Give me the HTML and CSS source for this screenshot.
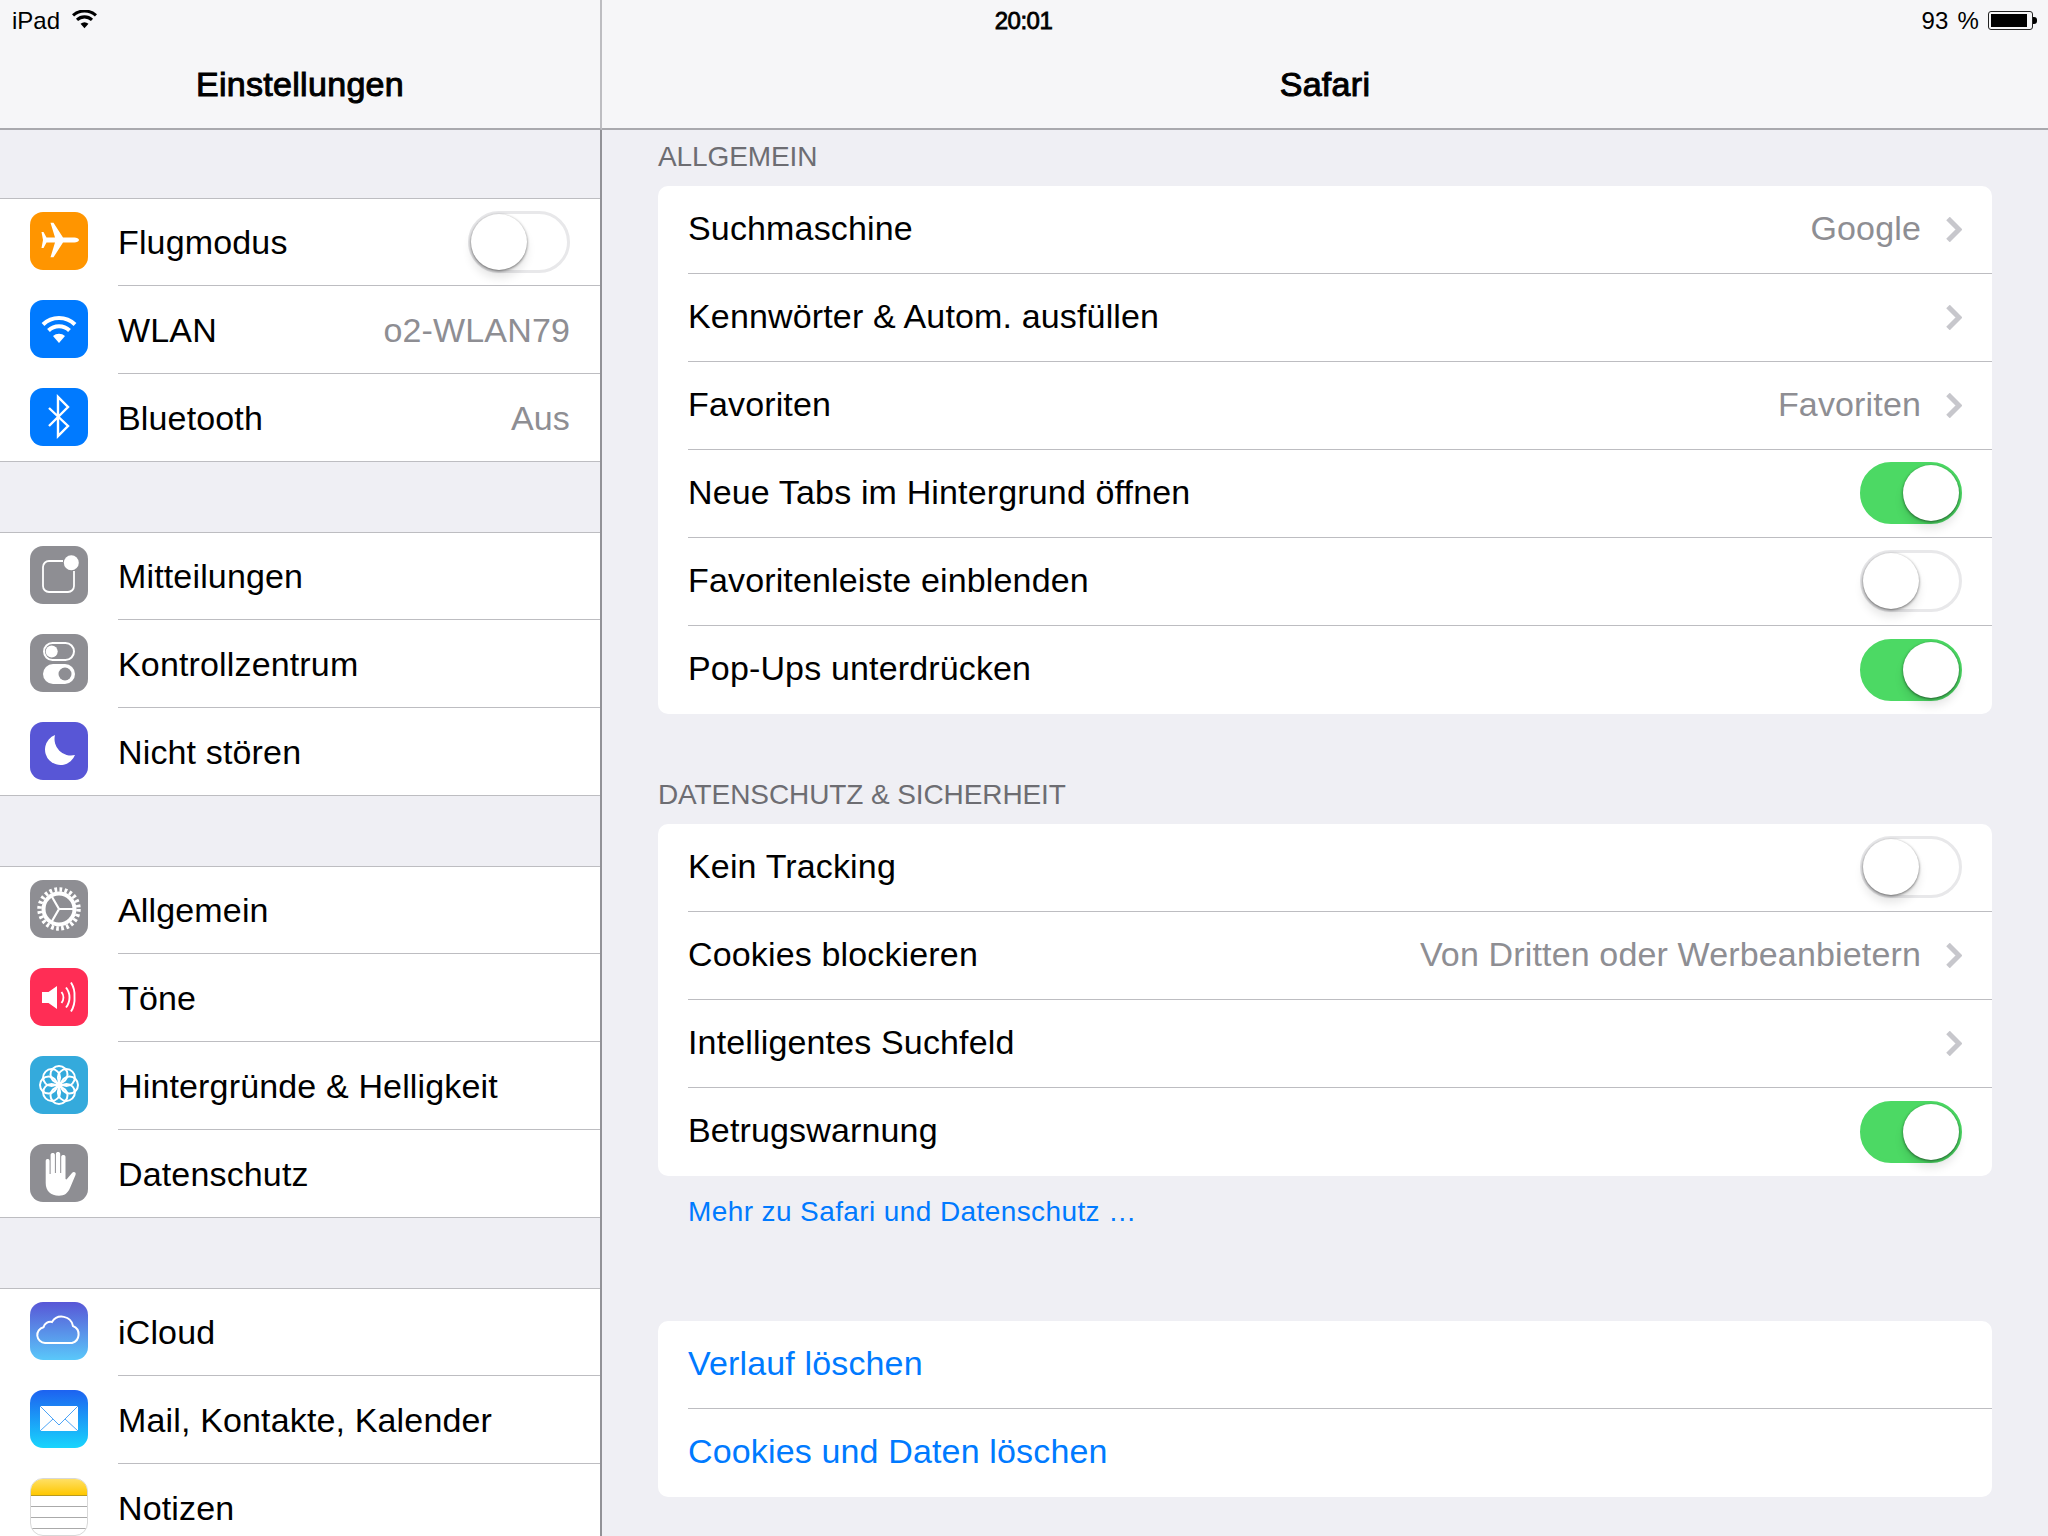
FILE: index.html
```html
<!DOCTYPE html>
<html lang="de">
<head>
<meta charset="utf-8">
<title>Einstellungen</title>
<link rel="stylesheet" href="styles.css">
</head>
<body>
<div class="screen">
  <div class="statusbar">
    <div class="status-left"><span>iPad</span>
      <svg class="status-wifi" viewBox="1 1.500 24 18"><path d="M13 19 9.2 14.600a6 6 0 0 1 7.600 0z" fill="#000"/><path d="M5.800 10.800a10.600 10.600 0 0 1 14.400 0M2 6.600a16.400 16.400 0 0 1 22 0" fill="none" stroke="#000" stroke-width="3"/></svg>
    </div>
    <div class="status-time">20:01</div>
    <div class="status-right"><span class="status-pct">93 %</span>
      <div class="battery"><div class="battery-level"></div></div><div class="battery-tip"></div>
    </div>
  </div>

  <aside class="sidebar">
    <header class="navbar"><h1 class="nav-title">Einstellungen</h1></header>
    <div class="sidebar-list">
      <section class="group">
        <div class="row"><div class="icon ic-orange"><svg viewBox="0 0 58 58"><path d="M49 28c0-1.500-2.500-2.400-4.500-2.400H33L23.500 10.700h-3L25 25.600h-8.500L13.500 20h-2L13 28l-1.500 8h2l3-5.600H25l-4.500 14.900h3l9.500-14.900h11.500c2 0 4.500-.9 4.500-2.400z" fill="#fff"/></svg></div>
          <div class="row-body"><span class="label">Flugmodus</span><div class="switch"><div class="knob"></div></div></div></div>
        <div class="row"><div class="icon ic-blue"><svg viewBox="0 0 58 58"><path d="M29 43l-6-7a9 9 0 0 1 12 0z" fill="#fff"/><path d="M18.500 30.500a15 15 0 0 1 21 0M13 24.500a23 23 0 0 1 32 0" fill="none" stroke="#fff" stroke-width="4"/></svg></div>
          <div class="row-body"><span class="label">WLAN</span><span class="value">o2-WLAN79</span></div></div>
        <div class="row"><div class="icon ic-blue"><svg viewBox="0 0 58 58"><path d="M19 20l19 18-10 10V9l10 10-19 19" fill="none" stroke="#fff" stroke-width="2.400"/></svg></div>
          <div class="row-body"><span class="label">Bluetooth</span><span class="value">Aus</span></div></div>
      </section>
      <section class="group">
        <div class="row"><div class="icon ic-gray"><svg viewBox="0 0 58 58"><path d="M33 15H19a6 6 0 0 0-6 6v19a6 6 0 0 0 6 6h19a6 6 0 0 0 6-6V25" fill="none" stroke="#fff" stroke-width="1.800"/><circle cx="41.300" cy="16.700" r="7.500" fill="#fff"/></svg></div>
          <div class="row-body"><span class="label">Mitteilungen</span></div></div>
        <div class="row"><div class="icon ic-gray"><svg viewBox="0 0 58 58"><rect x="14" y="9" width="30" height="17" rx="8.500" fill="none" stroke="#fff" stroke-width="2"/><circle cx="21.700" cy="17.500" r="6" fill="#fff"/><rect x="13" y="30" width="32" height="20" rx="10" fill="#fff"/><circle cx="35" cy="40" r="6.500" fill="#8e8e93"/></svg></div>
          <div class="row-body"><span class="label">Kontrollzentrum</span></div></div>
        <div class="row"><div class="icon ic-indigo"><svg viewBox="0 0 58 58"><path d="M25 13A15.500 15.500 0 1 0 45 33 16.500 16.500 0 0 1 25 13z" fill="#fff"/></svg></div>
          <div class="row-body"><span class="label">Nicht stören</span></div></div>
      </section>
      <section class="group">
        <div class="row"><div class="icon ic-gray"><svg viewBox="0 0 58 58"><circle cx="29" cy="29" r="19.500" fill="none" stroke="#fff" stroke-width="4.500" stroke-dasharray="2.700 2.400"/><circle cx="29" cy="29" r="15.500" fill="none" stroke="#fff" stroke-width="4"/><path d="M29 29H44M29 29 21.500 16M29 29 21.500 42" fill="none" stroke="#fff" stroke-width="2.200"/></svg></div>
          <div class="row-body"><span class="label">Allgemein</span></div></div>
        <div class="row"><div class="icon ic-pink"><svg viewBox="0 0 58 58"><path d="M12 24h6.500L27 18v23l-8.500-6H12z" fill="#fff"/><path d="M31.500 24a9 9 0 0 1 0 11M36 19.500a16 16 0 0 1 0 20M41 14.500a24 24 0 0 1 3.500 14.500 24 24 0 0 1-3.500 14.500" fill="none" stroke="#fff" stroke-width="1.900"/></svg></div>
          <div class="row-body"><span class="label">Töne</span></div></div>
        <div class="row"><div class="icon ic-cyan"><svg viewBox="0 0 58 58"><g fill="none" stroke="#fff" stroke-width="2"><circle cx="29" cy="18.500" r="8.500"/><circle cx="29" cy="39.500" r="8.500"/><circle cx="18.500" cy="29" r="8.500"/><circle cx="39.500" cy="29" r="8.500"/><circle cx="21.600" cy="21.600" r="8.500"/><circle cx="36.400" cy="21.600" r="8.500"/><circle cx="21.600" cy="36.400" r="8.500"/><circle cx="36.400" cy="36.400" r="8.500"/></g><circle cx="29" cy="29" r="3.200" fill="#fff"/></svg></div>
          <div class="row-body"><span class="label">Hintergründe &amp; Helligkeit</span></div></div>
        <div class="row"><div class="icon ic-gray"><svg viewBox="0 0 58 58"><path d="M15.700 17c0-2.600 3.900-2.600 3.900 0v13h1V11c0-2.600 4.300-2.600 4.300 0v18h1V10c0-2.600 4.300-2.600 4.300 0v19h1V13c0-2.600 4.300-2.600 4.300 0v22l1 .5 5.500-6.500c1.700-2 4.700-.4 3.500 2L40 44c-2.500 5.500-5.500 7.700-11 7.700-8.500 0-13.300-4.700-13.300-12.700z" fill="#fff"/></svg></div>
          <div class="row-body"><span class="label">Datenschutz</span></div></div>
      </section>
      <section class="group">
        <div class="row"><div class="icon ic-icloud"><svg viewBox="0 0 58 58"><path d="M15 41a8 8 0 0 1-1.500-15.800A7 7 0 0 1 22 20a11.500 11.500 0 0 1 21 4 9 9 0 0 1-1 17z" fill="none" stroke="#fff" stroke-width="2"/></svg></div>
          <div class="row-body"><span class="label">iCloud</span></div></div>
        <div class="row"><div class="icon ic-mail"><svg viewBox="0 0 58 58"><rect x="10" y="16" width="38" height="25" fill="#fff"/><path d="M10 16l19 19 19-19M10 41l13-12M48 41 35 29" fill="none" stroke="#3a9af5" stroke-width=".9"/></svg></div>
          <div class="row-body"><span class="label">Mail, Kontakte, Kalender</span></div></div>
        <div class="row"><div class="icon ic-notes"><div class="notes-top"></div><div class="notes-line"></div><div class="notes-line"></div><div class="notes-line"></div></div>
          <div class="row-body"><span class="label">Notizen</span></div></div>
      </section>
    </div>
  </aside>

  <main class="detail">
    <header class="navbar"><h1 class="nav-title">Safari</h1></header>
    <div class="detail-list">
      <h2 class="section-head section-first">ALLGEMEIN</h2>
      <section class="card">
        <div class="crow"><span class="label">Suchmaschine</span><span class="value">Google</span><svg class="chev" viewBox="0 0 16 25"><path d="M2 1.500 13 12.500 2 23.500" fill="none" stroke="#c7c7cc" stroke-width="5"/></svg></div>
        <div class="crow"><span class="label">Kennwörter &amp; Autom. ausfüllen</span><svg class="chev" viewBox="0 0 16 25"><path d="M2 1.500 13 12.500 2 23.500" fill="none" stroke="#c7c7cc" stroke-width="5"/></svg></div>
        <div class="crow"><span class="label">Favoriten</span><span class="value">Favoriten</span><svg class="chev" viewBox="0 0 16 25"><path d="M2 1.500 13 12.500 2 23.500" fill="none" stroke="#c7c7cc" stroke-width="5"/></svg></div>
        <div class="crow"><span class="label">Neue Tabs im Hintergrund öffnen</span><div class="switch is-on"><div class="knob"></div></div></div>
        <div class="crow"><span class="label">Favoritenleiste einblenden</span><div class="switch"><div class="knob"></div></div></div>
        <div class="crow"><span class="label">Pop-Ups unterdrücken</span><div class="switch is-on"><div class="knob"></div></div></div>
      </section>
      <h2 class="section-head">DATENSCHUTZ &amp; SICHERHEIT</h2>
      <section class="card">
        <div class="crow"><span class="label">Kein Tracking</span><div class="switch"><div class="knob"></div></div></div>
        <div class="crow"><span class="label">Cookies blockieren</span><span class="value">Von Dritten oder Werbeanbietern</span><svg class="chev" viewBox="0 0 16 25"><path d="M2 1.500 13 12.500 2 23.500" fill="none" stroke="#c7c7cc" stroke-width="5"/></svg></div>
        <div class="crow"><span class="label">Intelligentes Suchfeld</span><svg class="chev" viewBox="0 0 16 25"><path d="M2 1.500 13 12.500 2 23.500" fill="none" stroke="#c7c7cc" stroke-width="5"/></svg></div>
        <div class="crow"><span class="label">Betrugswarnung</span><div class="switch is-on"><div class="knob"></div></div></div>
      </section>
      <p class="foot-link">Mehr zu Safari und Datenschutz …</p>
      <section class="card">
        <div class="crow"><span class="label link">Verlauf löschen</span></div>
        <div class="crow"><span class="label link">Cookies und Daten löschen</span></div>
      </section>
    </div>
  </main>
</div>
</body>
</html>
```

FILE: styles.css
```css
* { box-sizing: border-box; }
html, body { margin: 0; padding: 0; background: #efeff4; }
body { font-family: "Liberation Sans", Arial, sans-serif; color: #000; }

.screen { position: relative; display: flex; width: 2048px; height: 1536px; overflow: hidden; }

.statusbar { position: absolute; top: 0; left: 0; right: 0; height: 41px; display: flex; align-items: center; justify-content: space-between; padding: 0 11px 0 12px; font-size: 24px; }
.status-left, .status-right { flex: 1; display: flex; align-items: center; }
.status-left { gap: 12px; }
.status-right { justify-content: flex-end; }
.status-wifi { width: 25px; height: 19px; margin-top: -2px; }
.status-time { font-weight: 400; -webkit-text-stroke: .8px #000; font-size: 24px; letter-spacing: -.5px; margin-left: -2px; }
.status-pct { word-spacing: 2px; letter-spacing: .2px; }
.battery { margin-left: 9px; width: 45px; height: 19px; border: 1px solid #222; border-radius: 3px; padding: 2px; }
.battery-level { height: 100%; width: 93%; background: #000; }
.battery-tip { width: 4px; height: 7px; background: #000; border-radius: 0 3px 3px 0; }

.sidebar { width: 602px; flex: none; display: flex; flex-direction: column; }
.detail { flex: 1; min-width: 0; display: flex; flex-direction: column; }

.navbar { height: 130px; flex: none; background: #f6f6f8; border-bottom: 2px solid #a9a9ae; display: flex; align-items: flex-end; justify-content: center; padding-bottom: 24px; }
.sidebar .navbar { border-right: 2px solid #bdbdc1; }
.nav-title { margin: 0; font-size: 34px; font-weight: 400; -webkit-text-stroke: 1px #000; line-height: 40px; letter-spacing: .3px; }

.sidebar-list { flex: 1; min-height: 0; padding-top: 68px; display: flex; flex-direction: column; gap: 70px; border-right: 2px solid #929297; }
.group { flex: none; background: #fff; box-shadow: inset 0 1px #bdbdc1, inset 0 -1px #bdbdc1; }
.row { display: flex; height: 88px; padding-left: 30px; }
.icon { width: 58px; height: 58px; flex: none; margin-top: 14px; border-radius: 13px; overflow: hidden; }
.icon svg { display: block; width: 58px; height: 58px; }
.row-body { flex: 1; min-width: 0; margin-left: 30px; padding-right: 30px; display: flex; align-items: center; justify-content: space-between; border-bottom: 1px solid #bdbdc1; }
.row:last-child .row-body { border-bottom: 0; }

.label { font-size: 34px; line-height: 40px; letter-spacing: .15px; }
.value { font-size: 34px; line-height: 40px; letter-spacing: .15px; color: #8e8e93; }
.link { color: #007aff; }

.ic-orange { background: #ff9500; }
.ic-blue { background: #007aff; }
.ic-gray { background: #8e8e93; }
.ic-indigo { background: #5856d6; }
.ic-pink { background: #ff2d55; }
.ic-cyan { background: #34aadc; }
.ic-icloud { background: linear-gradient(180deg, #5856d6, #5ac8fa); }
.ic-mail { background: linear-gradient(180deg, #1d62f0, #19d5fd); }
.ic-notes { background: #fff; border: 1px solid #d8d8d8; }
.notes-top { height: 18px; margin: -1px -1px 0; background: linear-gradient(180deg, #ffe16b, #ffc800); border-bottom: 1px solid #b89a20; }
.notes-line { height: 11px; border-bottom: 1px solid #aaa; }

.switch { width: 102px; height: 62px; flex: none; border: 3px solid #e8e8ea; border-radius: 31px; display: flex; justify-content: flex-start; background: #fff; }
.switch.is-on { background: #4cd964; border-color: #4cd964; justify-content: flex-end; }
.knob { width: 56px; height: 56px; border-radius: 50%; background: #fff; box-shadow: 0 8px 10px rgba(0,0,0,.1), 0 1px 3px rgba(0,0,0,.55); }

.detail-list { padding: 0 56px; display: flex; flex-direction: column; }
.section-head { margin: 64px 0 0; height: 46px; font-size: 28px; line-height: 34px; font-weight: 400; letter-spacing: -.1px; color: #6d6d72; }
.section-first { margin-top: 10px; }
.card { background: #fff; border-radius: 10px; padding-left: 30px; overflow: hidden; }
.crow { height: 88px; display: flex; align-items: center; padding-right: 30px; padding-bottom: 1px; border-bottom: 1px solid #bdbdc1; }
.crow:last-child { border-bottom: 0; }
.crow .label { margin-right: auto; }
.crow .label, .crow .value { margin-bottom: 3px; }
.value + .chev { margin-left: 25px; }
.chev { width: 16px; height: 25px; flex: none; }
.foot-link { margin: 0 0 0 30px; padding-top: 19px; height: 145px; font-size: 28px; line-height: 34px; letter-spacing: .4px; color: #007aff; }
```
